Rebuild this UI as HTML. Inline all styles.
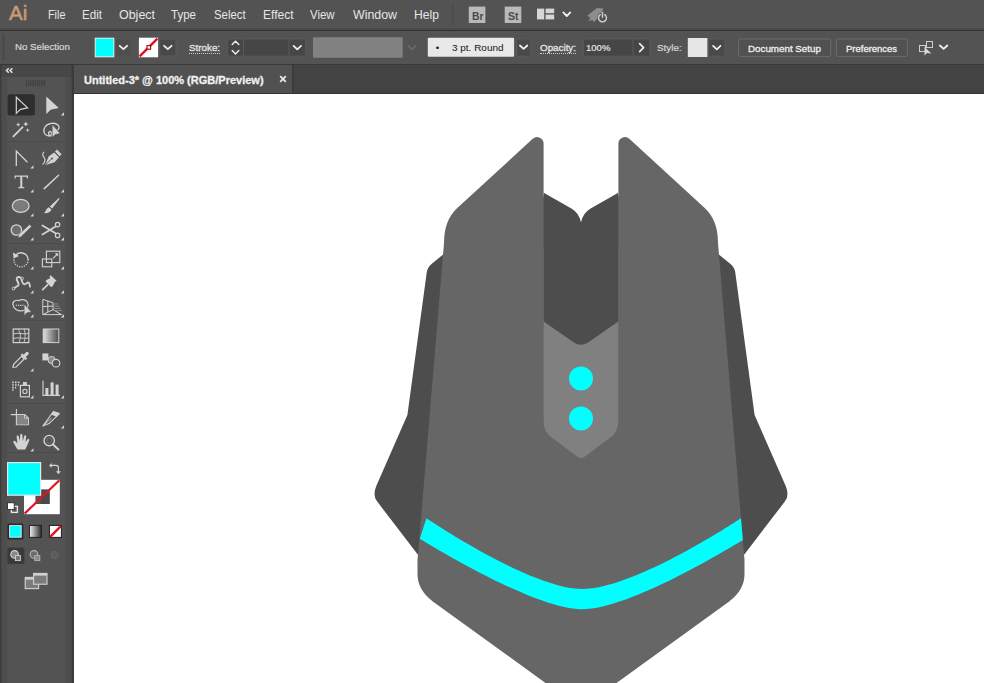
<!DOCTYPE html>
<html><head><meta charset="utf-8"><title>Untitled-3* @ 100% (RGB/Preview)</title>
<style>
*{box-sizing:border-box;margin:0;padding:0}
html,body{width:984px;height:683px;overflow:hidden;background:#535353;font-family:"Liberation Sans",sans-serif}
#app{position:relative;width:984px;height:683px;overflow:hidden;background:#535353}
.abs{position:absolute}
.tx{position:absolute;white-space:nowrap;transform-origin:0 0;display:inline-block}
#menubar{left:0;top:0;width:984px;height:31px;background:#535353}
#mb2{left:0;top:28px;width:984px;height:2px;background:#4b4b4b}
#mb3{left:0;top:30px;width:984px;height:1px;background:#303030}
#ctrl{left:0;top:31px;width:984px;height:33px;background:#535353}
#tabbar{left:0;top:64px;width:984px;height:30px;background:#434343;border-top:1px solid #383838;border-bottom:1px solid #333}
#tab{left:74px;top:65px;width:220px;height:28px;background:#515151;border-right:2px solid #3b3b3b}
#canvas{left:74px;top:94px;width:910px;height:589px;background:#fff}
#tools{left:0;top:64px;width:74px;height:619px;background:#535353;border-right:1px solid #3c3c3c;border-top:1px solid #363636}
#thead{left:0;top:65px;width:73px;height:12px;background:#474747}
</style></head><body>
<div id="app">
<div id="menubar" class="abs"></div><div id="mb2" class="abs"></div><div id="mb3" class="abs"></div>
<div id="ctrl" class="abs"></div>
<div id="tabbar" class="abs"></div>
<div id="tab" class="abs"></div>
<div id="canvas" class="abs"></div>
<div id="tools" class="abs"></div><div id="thead" class="abs"></div>
<svg class="abs" style="left:0;top:0" width="984" height="683" viewBox="0 0 984 683">
<clipPath id="bodyclip"><path d="M543.6 196 L543.6 143.6 A6.5 6.5 0 0 0 532.7 138.8 L457 208.3 Q444 220.5 444 243 L417.5 560 L417.5 574 Q417.5 590 432.8 601.4 L581 708.7 L729.2 601.4 Q744.5 590 744.5 574 L744.5 560 L718 243 Q718 220.5 705 208.3 L629.3 138.8 A6.5 6.5 0 0 0 618.4 143.6 L618.4 196 L581 226 Z"/></clipPath><clipPath id="cv"><rect x="74" y="94" width="910" height="589"/></clipPath>
<g clip-path="url(#cv)">
<!-- wings -->
<path id="wingL" fill="#4d4d4d" d="M470 250 L445 253 L431.5 264 Q427.5 267.5 426.8 272 L407.4 415 L376.5 485.6 Q372.3 495.2 377 501.3 L430 570.6 L470 560 Z"/>
<path id="wingR" fill="#4d4d4d" transform="translate(1162 0) scale(-1 1)" d="M470 250 L445 253 L431.5 264 Q427.5 267.5 426.8 272 L407.4 415 L376.5 485.6 Q372.3 495.2 377 501.3 L430 570.6 L470 560 Z"/>
<!-- body -->
<path id="body" fill="#666666" d="M543.6 196 L543.6 143.6 A6.5 6.5 0 0 0 532.7 138.8 L457 208.3 Q444 220.5 444 243 L417.5 560 L417.5 574 Q417.5 590 432.8 601.4 L581 708.7 L729.2 601.4 Q744.5 590 744.5 574 L744.5 560 L718 243 Q718 220.5 705 208.3 L629.3 138.8 A6.5 6.5 0 0 0 618.4 143.6 L618.4 196 L581 226 Z"/>
<!-- light strip -->
<path fill="#808080" d="M543.7 250 L618.3 250 L618.3 421 Q618.3 431.8 611 437 L585 456.5 Q581 459.5 577 456.5 L551 437 Q543.7 431.8 543.7 421 Z"/>
<!-- inner dark -->
<path fill="#4d4d4d" d="M543.7 192.7 L571.4 208.5 Q579 213 581 222.2 Q583 213 590.6 208.5 L618.3 192.7 L618.3 321.6 L588.5 342.2 Q581 347.4 573.5 342.2 L543.7 321.6 Z"/>
<circle cx="581" cy="378.5" r="12" fill="#00ffff"/>
<circle cx="581" cy="418.6" r="12" fill="#00ffff"/>
<path fill="#00ffff" clip-path="url(#bodyclip)" d="M426.4 518.3 C436.4 524.9 532.9 589 582.5 589 C632.1 589 728.6 526.4 738.6 519.8 L748.6 513.4 L755.2 532.7 L745.2 538.7 C735.2 544.7 630.7 609.3 582.5 609.3 C534.3 609.3 429.8 544.7 419.8 538.7 Z"/>
</g>
<rect x="94.7" y="37.7" width="19.6" height="19.6" fill="#e8e8e8"/><rect x="95.7" y="38.7" width="17.6" height="17.6" fill="#00ffff"/>
<rect x="115.6" y="39" width="16.3" height="17" rx="1.5" fill="#4e4e4e" stroke="#5a5a5a" stroke-width="0.8"/>
<path d="M119.7 45.8 L123.4 49.2 L127.1 45.8" fill="none" stroke="#f0f0f0" stroke-width="1.8" stroke-linecap="round" stroke-linejoin="round"/>
<rect x="138.9" y="37.7" width="19.2" height="19.6" fill="#ffffff"/>
<path d="M139.6 56.4 L157.4 38.6" stroke="#e0101e" stroke-width="2.3"/>
<rect x="147" y="45.6" width="3.6" height="3.6" fill="#fff" stroke="#a8000c" stroke-width="1.1"/>
<rect x="159.7" y="39" width="16.3" height="17" rx="1.5" fill="#494949" stroke="#5e5e5e" stroke-width="0.8"/>
<path d="M164.1 45.8 L167.8 49.2 L171.5 45.8" fill="none" stroke="#f0f0f0" stroke-width="1.8" stroke-linecap="round" stroke-linejoin="round"/>
<rect x="227.3" y="39" width="78.4" height="17.2" rx="2" fill="#464646" stroke="#5e5e5e" stroke-width="0.8"/>
<path d="M243.5 39.3 V55.9 M289 39.3 V55.9" stroke="#5e5e5e" stroke-width="0.8"/>
<path d="M232.2 44.6 L235.5 41.2 L238.8 44.6" fill="none" stroke="#f0f0f0" stroke-width="1.4" stroke-linecap="round" stroke-linejoin="round"/>
<path d="M232.2 50.6 L235.5 54.0 L238.8 50.6" fill="none" stroke="#f0f0f0" stroke-width="1.4" stroke-linecap="round" stroke-linejoin="round"/>
<path d="M293.6 45.9 L297.3 49.3 L301.0 45.9" fill="none" stroke="#f0f0f0" stroke-width="1.8" stroke-linecap="round" stroke-linejoin="round"/>
<rect x="313" y="37.2" width="89.7" height="20.6" rx="1" fill="#828282"/>
<path d="M408.3 45.9 L412.0 49.3 L415.7 45.9" fill="none" stroke="#6a6a6a" stroke-width="1.8" stroke-linecap="round" stroke-linejoin="round"/>
<rect x="427.8" y="37.7" width="86.3" height="19" rx="1" fill="#e8e8e8"/>
<rect x="516.6" y="39" width="14.2" height="17.2" rx="1.5" fill="#494949" stroke="#5e5e5e" stroke-width="0.8"/>
<path d="M519.9 45.5 L523.6 48.9 L527.3 45.5" fill="none" stroke="#f0f0f0" stroke-width="1.8" stroke-linecap="round" stroke-linejoin="round"/>
<rect x="583.3" y="39" width="66.6" height="17.2" rx="2" fill="#464646" stroke="#5e5e5e" stroke-width="0.8"/>
<path d="M633 39.3 V55.9" stroke="#5e5e5e" stroke-width="0.8"/>
<path d="M639.6 43.6 L643.6 47.6 L639.6 51.6" fill="none" stroke="#f0f0f0" stroke-width="1.6" stroke-linecap="round" stroke-linejoin="round"/>
<rect x="687.8" y="38" width="19.6" height="19" fill="#e6e6e6"/>
<rect x="708.4" y="39" width="16.6" height="17.2" rx="1.5" fill="#494949" stroke="#5e5e5e" stroke-width="0.8"/>
<path d="M713.1 45.9 L716.8 49.3 L720.5 45.9" fill="none" stroke="#f0f0f0" stroke-width="1.8" stroke-linecap="round" stroke-linejoin="round"/>
<rect x="738.6" y="39" width="92.2" height="17.4" rx="1.5" fill="#515151" stroke="#6c6c6c" stroke-width="1"/>
<rect x="836.4" y="39" width="71" height="17.4" rx="1.5" fill="#515151" stroke="#6c6c6c" stroke-width="1"/>
<g stroke="#cfcfcf" stroke-width="1" fill="none"><rect x="919.5" y="45.5" width="6" height="6"/><rect x="926.5" y="41.5" width="6" height="6"/></g><path d="M924.5 47 L924.5 55.5 L927 53 L931.5 53.5 Z" fill="#d8d8d8"/>
<path d="M939.9 45.5 L943.6 48.9 L947.3 45.5" fill="none" stroke="#f0f0f0" stroke-width="1.8" stroke-linecap="round" stroke-linejoin="round"/>
<path d="M453 5 V26" stroke="#474747" stroke-width="1"/>
<rect x="468.8" y="6.6" width="16.6" height="16.4" fill="#b9b9b9"/>
<rect x="504.7" y="6.6" width="16.6" height="16.4" fill="#b9b9b9"/>
<g fill="#d6d6d6"><rect x="537" y="8.6" width="7.2" height="10.8"/><rect x="545.6" y="8.6" width="8.6" height="4.6"/><rect x="545.6" y="14.6" width="8.6" height="4.8"/></g>
<path d="M563.3 12.4 L566.8 16.0 L570.3 12.4" fill="none" stroke="#f0f0f0" stroke-width="1.8" stroke-linecap="round" stroke-linejoin="round"/>
<g fill="#8d8d8d"><path d="M587.5 15.5 L597 8 L603 8.5 L602 14 L594 22 Z"/><path d="M588 21 l3-3 2 2z"/></g><circle cx="602.5" cy="17.5" r="5.2" fill="#535353"/><path d="M600.2 14.6 A4 4 0 1 0 604.8 14.6" fill="none" stroke="#d0d0d0" stroke-width="1.4" stroke-linecap="round"/><path d="M602.5 12.6 V17.2" stroke="#d0d0d0" stroke-width="1.4" stroke-linecap="round"/>
<path d="M280.2 76.2 L285.8 81.8 M285.8 76.2 L280.2 81.8" stroke="#e8e8e8" stroke-width="1.8"/>
<path d="M3.5 35 V61" stroke="#3e3e3e" stroke-width="2" stroke-dasharray="1 1"/>
<rect x="0" y="65" width="1.6" height="618" fill="#3c3c3c"/>
<rect x="1.6" y="77" width="5.2" height="606" fill="#4d4d4d"/>
<rect x="65.6" y="77" width="6" height="606" fill="#4c4c4c"/>
<rect x="71.6" y="65" width="2.4" height="618" fill="#3a3a3a"/>
<path d="M8.8 68.2 L6.5 70.5 L8.8 72.8 M12.4 68.2 L10.1 70.5 L12.4 72.8" fill="none" stroke="#dedede" stroke-width="1.6" stroke-linejoin="miter"/>
<path d="M26 83.2 H46" stroke="#3d3d3d" stroke-width="6" stroke-dasharray="1 1.2"/>
<path d="M8 141.5 H64" stroke="#4b4b4b" stroke-width="1"/>
<path d="M8 243.5 H64" stroke="#4b4b4b" stroke-width="1"/>
<path d="M8 320.5 H64" stroke="#4b4b4b" stroke-width="1"/>
<path d="M8 403.5 H64" stroke="#4b4b4b" stroke-width="1"/>
<path d="M8 452.5 H64" stroke="#4b4b4b" stroke-width="1"/>
<rect x="7.5" y="94.2" width="27.4" height="21.4" rx="2.5" fill="#2e2e2e"/>
<path d="M16.3 97.2 V113.4 L20.5 109.4 L27.6 107.8 Z" fill="none" stroke="#d3d3d3" stroke-width="1.2" stroke-linejoin="miter"/>
<path d="M46.3 96.6 V114 L50.6 109.8 L58.8 108 Z" fill="#d3d3d3"/>
<path d="M64 112.3 V115.5 H60.8 Z" fill="#d3d3d3"/>
<path d="M13.4 136.4 L22.6 127.2" stroke="#d3d3d3" stroke-width="1.8" stroke-linecap="round"/>
<g fill="#d3d3d3"><path d="M18.2 122.4 l0.7 1.5 1.5 0.7 -1.5 0.7 -0.7 1.5 -0.7 -1.5 -1.5 -0.7 1.5 -0.7z"/><path d="M25.8 121.6 l0.8 1.7 1.7 0.8 -1.7 0.8 -0.8 1.7 -0.8 -1.7 -1.7 -0.8 1.7 -0.8z"/><path d="M27.6 128.2 l0.6 1.3 1.3 0.6 -1.3 0.6 -0.6 1.3 -0.6 -1.3 -1.3 -0.6 1.3 -0.6z"/></g>
<path d="M50.5 136 C44 136 42.5 131 45 127 C47.5 123 55 122 58 125 C60 127 59 130 56 131 M50.5 136 C48 135 48 131.5 50 131.5 C52 131.5 52 134 50.5 136" fill="none" stroke="#d3d3d3" stroke-width="1.3"/>
<path d="M52.2 124.5 V137.5 L55.3 134.4 L60.2 133.6 Z" fill="#d3d3d3" stroke="#535353" stroke-width="0.6"/>
<path d="M16.3 166 V151 L27.4 162.2" fill="none" stroke="#d3d3d3" stroke-width="1.3"/>
<path d="M33.5 165.3 V168.5 H30.3 Z" fill="#d3d3d3"/>
<path d="M44.2 152 C41.8 153 42.8 156 44.2 157.6 C45.8 159.4 44.8 163 42.6 164.6" fill="none" stroke="#d3d3d3" stroke-width="1.2"/>
<path d="M45.2 165 L48.6 156.6 L54.2 152.4 L59 157.2 L54.6 162.2 Z" fill="#d3d3d3"/><path d="M55 151.6 L57 149.6 L61.6 154.2 L59.6 156.2 Z" fill="#d3d3d3"/><path d="M45.6 164.6 L51.6 158.8" stroke="#535353" stroke-width="0.9"/><circle cx="52" cy="158.4" r="1" fill="#535353"/>
<path d="M14.6 175.4 H28 V178.6 H27 L26.6 176.8 H22.3 V186.8 L24.3 187.3 V188.3 H18.3 V187.3 L20.3 186.8 V176.8 H16 L15.6 178.6 H14.6 Z" fill="#d3d3d3"/>
<path d="M33.5 189.3 V192.5 H30.3 Z" fill="#d3d3d3"/>
<path d="M44.2 188.6 L58.6 175.2" stroke="#d3d3d3" stroke-width="1.5" stroke-linecap="round"/>
<path d="M64 189.3 V192.5 H60.8 Z" fill="#d3d3d3"/>
<ellipse cx="20.7" cy="205.9" rx="8.4" ry="6.5" fill="#7b7b7b" stroke="#d3d3d3" stroke-width="1.2"/>
<path d="M33.5 213.3 V216.5 H30.3 Z" fill="#d3d3d3"/>
<path d="M58.8 198 L59.6 198.8 L52.2 208.6 L49.8 206.4 Z" fill="#d3d3d3"/><path d="M49 207.2 L51.4 209.6 C50.6 212.6 47 213.6 43.8 213.2 C46 212 45.8 208.2 49 207.2 Z" fill="#d3d3d3"/>
<path d="M64 213.3 V216.5 H60.8 Z" fill="#d3d3d3"/>
<circle cx="16.4" cy="230" r="5.2" fill="#6e6e6e" stroke="#d3d3d3" stroke-width="1.3"/>
<path d="M18 238 L18.8 234.4 L29.6 224.4 L31.6 226.6 L21 236.8 Z" fill="#d3d3d3" stroke="#535353" stroke-width="0.5"/>
<path d="M33.5 237.3 V240.5 H30.3 Z" fill="#d3d3d3"/>
<path d="M42.4 225.4 L55.6 233.2 M42.4 234.6 L55.6 226.6" stroke="#d3d3d3" stroke-width="1.7" stroke-linecap="round"/><circle cx="57.6" cy="224.6" r="2.2" fill="none" stroke="#d3d3d3" stroke-width="1.2"/><circle cx="57.6" cy="235.4" r="2.2" fill="none" stroke="#d3d3d3" stroke-width="1.2"/>
<path d="M64 237.3 V240.5 H60.8 Z" fill="#d3d3d3"/>
<path d="M15.4 255.6 A7.2 7.2 0 0 1 28.2 259.6" fill="none" stroke="#d3d3d3" stroke-width="1.4"/><path d="M28.2 259.6 A7.2 7.2 0 1 1 14 258" fill="none" stroke="#d3d3d3" stroke-width="1.3" stroke-dasharray="1.2 1.2"/><path d="M13 252.4 L13.6 258.4 L19 256 Z" fill="#d3d3d3"/>
<path d="M33.5 266.3 V269.5 H30.3 Z" fill="#d3d3d3"/>
<g fill="none" stroke="#d3d3d3" stroke-width="1.1"><rect x="46.4" y="251.2" width="13.4" height="11.4"/><rect x="42.4" y="259" width="9.4" height="7.8"/><path d="M53 258.4 L57.4 254"/></g><path d="M58.2 253.2 L58.2 256.6 L54.8 253.2 Z" fill="#d3d3d3"/>
<path d="M64 266.3 V269.5 H60.8 Z" fill="#d3d3d3"/>
<path d="M14 289 C15 286 18 287.4 18.6 284.6 C19 282 16 281 16.8 278.4 C17.6 276 21 276.6 21.6 279.6 C22.2 283 24 285.6 26.4 283.4 C28.6 281.4 29.6 283 30 286.6" fill="none" stroke="#d3d3d3" stroke-width="1.9" stroke-linecap="round"/><circle cx="13.4" cy="288.6" r="1.3" fill="#535353" stroke="#d3d3d3" stroke-width="0.9"/><circle cx="22.6" cy="278.4" r="1.1" fill="#535353" stroke="#d3d3d3" stroke-width="0.8"/>
<path d="M33.5 290.3 V293.5 H30.3 Z" fill="#d3d3d3"/>
<path d="M50.6 275.2 L56.6 280.8 L54.8 282 L52.6 286.4 L51 287 L45.6 281.6 L46.4 280 L50.4 278 L49.4 276.8 Z" fill="#d3d3d3"/><path d="M47.6 284.8 L42.6 289.6" stroke="#d3d3d3" stroke-width="1.7" stroke-linecap="round"/>
<path d="M64 290.3 V293.5 H60.8 Z" fill="#d3d3d3"/>
<path d="M13 305 C12 301 16 299.6 19 300.6 C22 298.6 27 300 27.6 303 C29.4 306 27 310 23 310.6 C18 311.6 13.6 309 13 305 Z" fill="none" stroke="#d3d3d3" stroke-width="1.2"/><path d="M15.8 305.4 H23.6" stroke="#d3d3d3" stroke-width="1.3" stroke-dasharray="1.2 1"/><path d="M24.2 304.2 V315.4 L26.9 312.7 L31.4 312 Z" fill="#d3d3d3" stroke="#535353" stroke-width="0.5"/>
<path d="M33.5 314.3 V317.5 H30.3 Z" fill="#d3d3d3"/>
<g fill="none" stroke="#d3d3d3" stroke-width="1"><path d="M42.8 299.4 V314.6 H62 M42.8 299.4 L53 302.8 V309.6 L42.8 314.6 M47.8 301.1 V312.2 M42.8 306.6 L53 306 M53 309.6 L61 314.4"/></g><path d="M54 304 H58 M54 306.2 H59.4 M54 308.4 H60.6 M54 310.6 H61.6" stroke="#9a9a9a" stroke-width="0.8"/>
<path d="M64 314.3 V317.5 H60.8 Z" fill="#d3d3d3"/>
<g fill="none" stroke="#d3d3d3"><rect x="13.2" y="329" width="15.6" height="13.6" stroke-width="1.2"/><path d="M18 329 C21 333 21 338 19 342.6 M24 329 C26 334 25 339 24 342.6 M13.2 334 C18 332 24 335 28.8 333.4 M13.2 338.6 C18 336.6 24 339.4 28.8 338" stroke-width="0.9"/></g>
<defs><linearGradient id="gr1" x1="0" x2="1" y1="0" y2="0"><stop offset="0" stop-color="#e0e0e0"/><stop offset="1" stop-color="#4a4a4a"/></linearGradient></defs><rect x="43.2" y="329" width="15.6" height="13.6" fill="url(#gr1)" stroke="#d3d3d3" stroke-width="1"/>
<path d="M13 367.4 L13.6 364.4 L21.6 356.4 L24.2 359 L16.2 367 Z" fill="none" stroke="#d3d3d3" stroke-width="1.2"/><path d="M20.6 354.8 L25.8 360 L27.2 358.4 L25.8 357 L28.6 354.2 C29.4 353 27.6 351.2 26.4 352 L23.6 354.8 L22.2 353.4 Z" fill="#d3d3d3"/>
<path d="M33.5 368.3 V371.5 H30.3 Z" fill="#d3d3d3"/>
<rect x="42.4" y="353.4" width="6" height="7" fill="#d3d3d3"/><circle cx="51.6" cy="360" r="3.6" fill="#8a8a8a" stroke="#d3d3d3" stroke-width="1"/><circle cx="56" cy="363.2" r="3.8" fill="#535353" stroke="#d3d3d3" stroke-width="1.2"/>
<rect x="20.4" y="385.4" width="9" height="11.4" fill="none" stroke="#d3d3d3" stroke-width="1.2"/><rect x="23" y="382" width="3.8" height="3.4" fill="#d3d3d3"/><circle cx="24.9" cy="391.4" r="2.1" fill="none" stroke="#d3d3d3" stroke-width="1.1"/><path d="M12.2 382.4 h1.6 M15 382.4 h1.6 M17.8 382.4 h1.6 M12.2 385 h1.6 M15 385 h1.6 M12.2 387.6 h1.6 M17.8 385 h1.2 M15 387.6 h1.2 M12.2 390 h1.4" stroke="#d3d3d3" stroke-width="1.6"/>
<path d="M33.5 395.3 V398.5 H30.3 Z" fill="#d3d3d3"/>
<path d="M43 380.8 V395.4 H60" fill="none" stroke="#d3d3d3" stroke-width="1.1"/><rect x="45.4" y="388" width="3" height="7" fill="#d3d3d3"/><rect x="50.6" y="382.4" width="3" height="12.6" fill="#d3d3d3"/><rect x="55.6" y="384.6" width="3" height="10.4" fill="#d3d3d3"/>
<path d="M64 395.3 V398.5 H60.8 Z" fill="#d3d3d3"/>
<path d="M16.4 409 V424.8 H28.4 V418 L24.8 414.6 H10.8" fill="none" stroke="#d3d3d3" stroke-width="1.1"/><path d="M17 415.2 H24.4 L27.8 418.4 V424.2 H17 Z" fill="#858585"/><path d="M24.6 414.8 V418.2 H28.2" fill="none" stroke="#d3d3d3" stroke-width="0.9"/>
<path d="M42.8 426 L53.4 411.6 L59.4 413.6 L49 423.6 Z" fill="none" stroke="#d3d3d3" stroke-width="1.1" stroke-linejoin="round"/><path d="M53.4 411.6 L59.4 413.6 L56.8 417 L51.2 414.6 Z" fill="#d3d3d3"/><path d="M43 425.8 L51.6 418" stroke="#d3d3d3" stroke-width="0.9"/>
<path d="M64 425.3 V428.5 H60.8 Z" fill="#d3d3d3"/>
<path d="M17.6 449.6 C15.6 446.4 14.6 444.6 13.4 442.4 C12.8 441 14.6 440.2 15.6 441.4 L17.4 443.6 L16.6 436.8 C16.4 435.2 18.4 435 18.8 436.4 L19.8 441 L20.2 435 C20.2 433.6 22.2 433.6 22.4 435 L22.8 441 L24.2 436 C24.6 434.6 26.4 435 26.2 436.4 L25.6 442 L27.4 439.4 C28.2 438.2 29.8 439 29.2 440.4 C28 443.4 27 446.4 25.2 449.6 Z" fill="#d3d3d3"/>
<path d="M33.5 448.3 V451.5 H30.3 Z" fill="#d3d3d3"/>
<circle cx="49.2" cy="440.6" r="5.2" fill="none" stroke="#d3d3d3" stroke-width="1.4"/><path d="M53 444.6 L58.4 449.4" stroke="#d3d3d3" stroke-width="2" stroke-linecap="round"/><circle cx="49.2" cy="440.6" r="2.6" fill="none" stroke="#7a7a7a" stroke-width="0.8"/>
<rect x="24" y="479.8" width="35.8" height="34.4" fill="#ffffff"/><rect x="35.4" y="489.6" width="14.2" height="14.4" fill="#535353"/><rect x="41.2" y="489.6" width="8.4" height="14.4" fill="#4a4a4a"/>
<path d="M24.6 513.6 L59.4 480.2" stroke="#e0141f" stroke-width="2.2"/>
<rect x="7" y="462" width="34.2" height="33.8" fill="#e6e6e6"/><rect x="8.2" y="463.2" width="31.8" height="31.4" fill="#00ffff"/>
<path d="M51.6 465.4 H56 Q58.4 465.4 58.4 467.8 V472" fill="none" stroke="#d3d3d3" stroke-width="1.2"/><path d="M51.8 463 L49 465.4 L51.8 467.8 Z M56 471.2 L58.4 474.2 L60.8 471.2 Z" fill="#d3d3d3"/>
<rect x="11.4" y="506.4" width="6" height="6" fill="none" stroke="#e8e8e8" stroke-width="1.4"/><rect x="7.6" y="502.8" width="6.6" height="6.6" fill="#ffffff" stroke="#222" stroke-width="0.8"/>
<rect x="7.4" y="523.4" width="16" height="16" rx="1.5" fill="#2b2b2b"/><rect x="9.6" y="525.6" width="11.6" height="11.6" fill="#00ffff" stroke="#e6e6e6" stroke-width="0.9"/>
<defs><linearGradient id="gr2" x1="0" x2="1" y1="0" y2="0"><stop offset="0" stop-color="#f4f4f4"/><stop offset="1" stop-color="#2a2a2a"/></linearGradient></defs><rect x="29.4" y="525.4" width="12" height="12" fill="url(#gr2)" stroke="#1e1e1e" stroke-width="1"/>
<rect x="49.4" y="525.4" width="12" height="12" fill="#ffffff" stroke="#1e1e1e" stroke-width="1"/><path d="M50.2 536.8 L60.8 526.2" stroke="#e0141f" stroke-width="2.4"/>
<rect x="7.4" y="547.6" width="17" height="16.4" rx="1.5" fill="#3a3a3a"/>
<circle cx="14.6" cy="554.4" r="3.8" fill="#8a8a8a" stroke="#d3d3d3" stroke-width="1.1"/><rect x="15.4" y="555.6" width="5" height="5" fill="#777" stroke="#d3d3d3" stroke-width="0.9"/>
<circle cx="34" cy="554.4" r="3.8" fill="#6c6c6c" stroke="#b4b4b4" stroke-width="1.1"/><rect x="34.8" y="555.6" width="5" height="5" fill="#8a8a8a" stroke="#b4b4b4" stroke-width="0.9"/>
<circle cx="54.6" cy="555" r="3.6" fill="#5c5c5c" stroke="#666" stroke-width="1"/>
<rect x="25.2" y="577.4" width="13.4" height="11.2" fill="#7b7b7b" stroke="#d3d3d3" stroke-width="1.1"/><path d="M25.2 578.6 H38.6" stroke="#d3d3d3" stroke-width="2"/>
<rect x="33.6" y="573.4" width="13.4" height="10.8" fill="#7b7b7b" stroke="#d3d3d3" stroke-width="1.1"/><path d="M33.6 574.6 H47" stroke="#d3d3d3" stroke-width="2"/>
</svg>
<span id="ai" class="tx" style="left:8.5px;top:3.0px;font-size:20.5px;line-height:20.5px;font-weight:normal;color:#cc9a74;transform:scaleX(1.0036);-webkit-text-stroke:0.5px #cc9a74;">Ai</span>
<span id="m1" class="tx" style="left:47.6px;top:8.6px;font-size:12.5px;line-height:12.5px;font-weight:normal;color:#e6e6e6;transform:scaleX(0.8633);">File</span>
<span id="m2" class="tx" style="left:82.0px;top:8.6px;font-size:12.5px;line-height:12.5px;font-weight:normal;color:#e6e6e6;transform:scaleX(0.9282);">Edit</span>
<span id="m3" class="tx" style="left:119.0px;top:8.6px;font-size:12.5px;line-height:12.5px;font-weight:normal;color:#e6e6e6;transform:scaleX(0.9961);">Object</span>
<span id="m4" class="tx" style="left:171.0px;top:8.6px;font-size:12.5px;line-height:12.5px;font-weight:normal;color:#e6e6e6;transform:scaleX(0.9222);">Type</span>
<span id="m5" class="tx" style="left:214.0px;top:8.6px;font-size:12.5px;line-height:12.5px;font-weight:normal;color:#e6e6e6;transform:scaleX(0.9094);">Select</span>
<span id="m6" class="tx" style="left:263.0px;top:8.6px;font-size:12.5px;line-height:12.5px;font-weight:normal;color:#e6e6e6;transform:scaleX(0.9643);">Effect</span>
<span id="m7" class="tx" style="left:310.0px;top:8.6px;font-size:12.5px;line-height:12.5px;font-weight:normal;color:#e6e6e6;transform:scaleX(0.9153);">View</span>
<span id="m8" class="tx" style="left:353.0px;top:8.6px;font-size:12.5px;line-height:12.5px;font-weight:normal;color:#e6e6e6;transform:scaleX(0.9895);">Window</span>
<span id="m9" class="tx" style="left:414.0px;top:8.6px;font-size:12.5px;line-height:12.5px;font-weight:normal;color:#e6e6e6;transform:scaleX(0.9721);">Help</span>
<span id="br" class="tx" style="left:471.5px;top:10.7px;font-size:10.5px;line-height:10.5px;font-weight:bold;color:#4a4a4a;transform:scaleX(0.9853);">Br</span>
<span id="st" class="tx" style="left:508.0px;top:10.7px;font-size:10.5px;line-height:10.5px;font-weight:bold;color:#4a4a4a;transform:scaleX(1.0000);">St</span>
<span id="c1" class="tx" style="left:15.2px;top:42.0px;font-size:9.8px;line-height:9.8px;font-weight:normal;color:#d8d8d8;transform:scaleX(0.9881);-webkit-text-stroke:0.2px #d8d8d8;">No Selection</span>
<span id="c2" class="tx" style="left:188.9px;top:43.4px;font-size:9.8px;line-height:9.8px;font-weight:normal;color:#e6e6e6;transform:scaleX(1.0017);-webkit-text-stroke:0.3px #e6e6e6;border-bottom:1px dotted #cfcfcf;">Stroke:</span>
<span id="c3" class="tx" style="left:451.8px;top:43.1px;font-size:9.8px;line-height:9.8px;font-weight:normal;color:#161616;transform:scaleX(1.0167);">3 pt. Round</span>
<span id="c3b" class="tx" style="left:435.8px;top:42.7px;font-size:9.8px;line-height:9.8px;font-weight:normal;color:#161616;transform:scaleX(1.0000);">•</span>
<span id="c4" class="tx" style="left:540.0px;top:42.8px;font-size:9.8px;line-height:9.8px;font-weight:normal;color:#e6e6e6;transform:scaleX(1.0017);-webkit-text-stroke:0.3px #e6e6e6;border-bottom:1px dotted #cfcfcf;">Opacity:</span>
<span id="c5" class="tx" style="left:586.4px;top:42.7px;font-size:9.8px;line-height:9.8px;font-weight:normal;color:#e6e6e6;transform:scaleX(0.9736);-webkit-text-stroke:0.2px #e6e6e6;">100%</span>
<span id="c6" class="tx" style="left:656.8px;top:43.3px;font-size:9.8px;line-height:9.8px;font-weight:normal;color:#d8d8d8;transform:scaleX(1.0116);-webkit-text-stroke:0.2px #d8d8d8;">Style:</span>
<span id="c7" class="tx" style="left:747.8px;top:43.5px;font-size:9.8px;line-height:9.8px;font-weight:normal;color:#f0f0f0;transform:scaleX(0.9988);-webkit-text-stroke:0.3px #f0f0f0;">Document Setup</span>
<span id="c8" class="tx" style="left:845.9px;top:43.5px;font-size:9.8px;line-height:9.8px;font-weight:normal;color:#f0f0f0;transform:scaleX(0.9673);-webkit-text-stroke:0.3px #f0f0f0;">Preferences</span>
<span id="tabt" class="tx" style="left:83.8px;top:74.7px;font-size:10.6px;line-height:10.6px;font-weight:bold;color:#f0f0f0;transform:scaleX(1.0393);-webkit-text-stroke:0.3px #f0f0f0;">Untitled-3* @ 100% (RGB/Preview)</span>
</div>
</body></html>
